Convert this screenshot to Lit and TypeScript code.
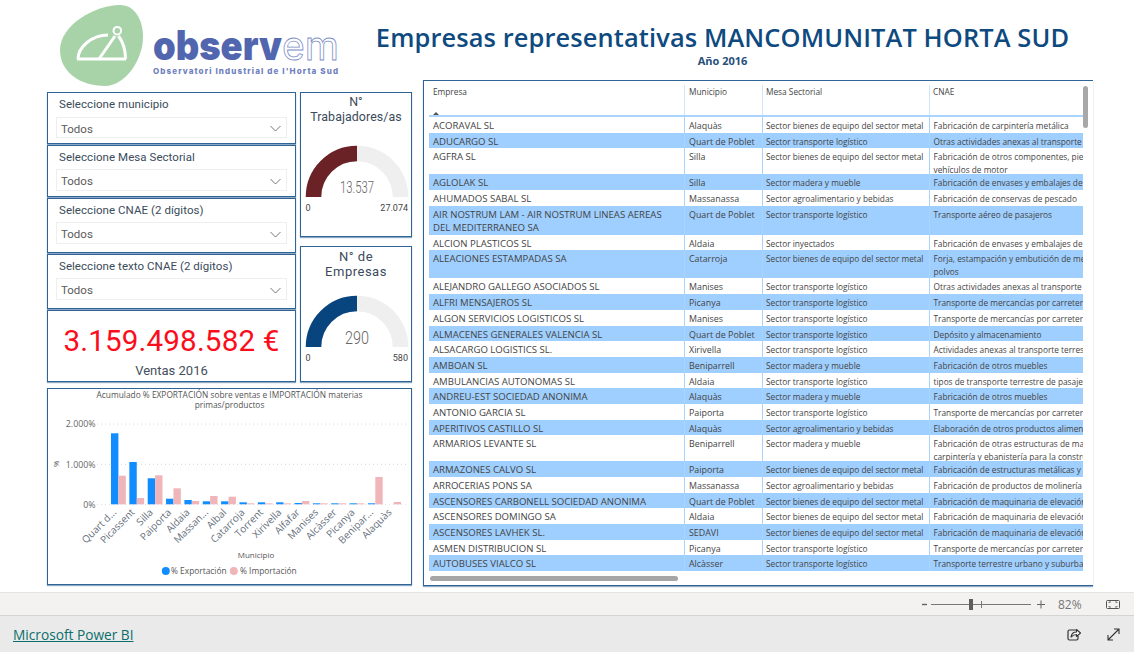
import { LitElement, html, css, svg } from "lit";
import { customElement } from "lit/decorators.js";

type Row = [string, string, string, string, number?];
const M = "Sector bienes de equipo del sector metal";
const T = "Sector transporte logístico";
const W = "Sector madera y mueble";
const A = "Sector agroalimentario y bebidas";
const TM = "Transporte de mercancías por carretera";
const EV = "Fabricación de maquinaria de elevación y manipulación";
const rows: Row[] = [
  ["ACORAVAL SL", "Alaquàs", M, "Fabricación de carpintería metálica"],
  ["ADUCARGO SL", "Quart de Poblet", T, "Otras actividades anexas al transporte"],
  ["AGFRA SL", "Silla", M, "Fabricación de otros componentes, piezas y accesorios para\nvehículos de motor", 26],
  ["AGLOLAK SL", "Silla", W, "Fabricación de envases y embalajes de madera"],
  ["AHUMADOS SABAL SL", "Massanassa", A, "Fabricación de conservas de pescado"],
  ["AIR NOSTRUM LAM - AIR NOSTRUM LINEAS AEREAS\nDEL MEDITERRANEO SA", "Quart de Poblet", T, "Transporte aéreo de pasajeros", 29],
  ["ALCION PLASTICOS SL", "Aldaia", "Sector inyectados", "Fabricación de envases y embalajes de plástico"],
  ["ALEACIONES ESTAMPADAS SA", "Catarroja", M, "Forja, estampación y embutición de metales; metalurgia de\npolvos", 28],
  ["ALEJANDRO GALLEGO ASOCIADOS SL", "Manises", T, "Otras actividades anexas al transporte"],
  ["ALFRI MENSAJEROS SL", "Picanya", T, TM],
  ["ALGON SERVICIOS LOGISTICOS SL", "Manises", T, TM],
  ["ALMACENES GENERALES VALENCIA SL", "Quart de Poblet", T, "Depósito y almacenamiento"],
  ["ALSACARGO LOGISTICS SL.", "Xirivella", T, "Actividades anexas al transporte terrestre"],
  ["AMBOAN SL", "Beniparrell", W, "Fabricación de otros muebles"],
  ["AMBULANCIAS AUTONOMAS SL", "Aldaia", T, "tipos de transporte terrestre de pasajeros"],
  ["ANDREU-EST SOCIEDAD ANONIMA", "Alaquàs", W, "Fabricación de otros muebles"],
  ["ANTONIO GARCIA SL", "Paiporta", T, TM],
  ["APERITIVOS CASTILLO SL", "Alaquàs", A, "Elaboración de otros productos alimenticios"],
  ["ARMARIOS LEVANTE SL", "Beniparrell", W, "Fabricación de otras estructuras de madera y piezas de\ncarpintería y ebanistería para la construcción", 26],
  ["ARMAZONES CALVO SL", "Paiporta", M, "Fabricación de estructuras metálicas y sus componentes"],
  ["ARROCERIAS PONS SA", "Massanassa", A, "Fabricación de productos de molinería"],
  ["ASCENSORES CARBONELL SOCIEDAD ANONIMA", "Quart de Poblet", M, EV],
  ["ASCENSORES DOMINGO SA", "Aldaia", M, EV],
  ["ASCENSORES LAVHEK SL.", "SEDAVI", M, EV],
  ["ASMEN DISTRIBUCION SL", "Picanya", T, TM],
  ["AUTOBUSES VIALCO SL", "Alcàsser", T, "Transporte terrestre urbano y suburbano de pasajeros"],
];

const slicers: [string, string][] = [
  ["Seleccione municipio", "s1"],
  ["Seleccione Mesa Sectorial", "s2"],
  ["Seleccione CNAE (2 dígitos)", "s3"],
  ["Seleccione texto CNAE (2 dígitos)", "s4"],
];

const bars: [string, number, number][] = [
  ["Quart d...", 433.3, 475.7],
  ["Picassent", 462, 498],
  ["Silla", 478.3, 475.3],
  ["Paiporta", 498.7, 488.3],
  ["Aldaia", 500, 501],
  ["Massan...", 501.3, 496],
  ["Albal", 501.3, 496.7],
  ["Catarroja", 502.3, 503.3],
  ["Torrent", 502.3, 503.3],
  ["Xirivella", 502.3, 503.3],
  ["Alfafar", 503, 501],
  ["Manises", 503.3, 503.3],
  ["Alcàsser", 503.3, 503.3],
  ["Picanya", 503.3, 503.3],
  ["Benipar...", 503.3, 477],
  ["Alaquàs", 504.3, 502],
];

const lines = (s: string) => {
  const p = s.split("\n");
  return p.map((l, i) => (i ? html`<br />${l}` : l));
};

@customElement("app-root")
export class AppRoot extends LitElement {
  static styles = css`
    :host { display: block; width: 1134px; height: 652px; overflow: hidden; background: #fff; font-family: "Roboto", sans-serif; color: #3d4a57; }
    .report { height: 592px; padding-left: 47px; box-sizing: border-box; }
    .top { height: 80px; display: flex; }
    .logo { width: 328px; height: 80px; flex: none; position: relative; }
    .logo svg { position: absolute; left: 0; top: 0; overflow: visible; }
    .logotext { font-family: "Inter", "Liberation Sans", sans-serif; font-weight: 900; fill: #5166ae; font-size: 41px; }
    .logoem { font-family: "Inter", "Liberation Sans", sans-serif; font-weight: 400; fill: #fff; stroke: #7d8ec6; stroke-width: 0.8px; font-size: 40px; }
    .logosub { font-family: "Inter", "Liberation Sans", sans-serif; font-weight: 800; fill: #6e80bd; font-size: 8px; }
    .heading { margin-left: 0; width: 695px; text-align: center; color: #0e4a80; padding-top: 21px; box-sizing: border-box; }
    .heading h1 { margin: 0; font: 600 25.4px/32px "Open Sans", sans-serif; white-space: nowrap; letter-spacing: 0.12px; }
    .heading p { margin: 0; font: 700 11px/14px "Open Sans", sans-serif; color: #264f7c; position: relative; top: 1px; }
    .body { display: flex; align-items: flex-start; }
    .left { width: 365px; margin-top: 12px; flex: none; }
    .cols { display: flex; justify-content: space-between; }
    .stack { width: 249px; display: flex; flex-direction: column; gap: 1px; }
    .gauges { width: 112px; display: flex; flex-direction: column; gap: 9px; }
    .card { box-sizing: border-box; border: 1px solid #2f6496; box-shadow: 0 1px 1px #8fa9c4; background: #fff; }
    .slicer { padding: 0 8px; height: 52px; }
    .slicer.tall { height: 55px; }
    .slicer h3 { margin: 0; font: 400 11.5px/16px "Roboto", sans-serif; letter-spacing: 0.05px; color: #3b4b5b; padding: 3px 0 0 3px; height: 23px; box-sizing: border-box; white-space: nowrap; }
    .slicer.s1 h3 { height: 24px; }
    .slicer.s1 .select { height: 21px; }
    .select { height: 22px; border: 1px solid #eeeeee; display: flex; align-items: center; justify-content: space-between; padding: 2px 5px 0 4px; box-sizing: border-box; font: 400 11.5px "Roboto", sans-serif; color: #5a5a5a; }
    .kpi { height: 72px; text-align: center; }
    .kpi .val { font: 400 29.6px/38px "Roboto", sans-serif; color: #fb0d1c; letter-spacing: 0.15px; padding-top: 11px; white-space: nowrap; }
    .kpi .lab { font: 400 13px/16px "Roboto", sans-serif; color: #44505c; margin-top: 3px; }
    .gauge { text-align: center; position: relative; }
    .gauge.g1 { height: 145px; }
    .gauge.g2 { height: 136px; }
    .gauge h3 { margin: 0; font: 400 12.4px/15px "Roboto", sans-serif; letter-spacing: 0.07px; color: #3b4b5b; padding-top: 1px; }
    .g2 h3 { padding-top: 2px; letter-spacing: 0.5px; font-size: 13px; }
    .gauge svg { display: block; }
    .g1 svg { margin-top: 21px; }
    .g2 svg { margin-top: 16px; }
    .gv { font-family: "Roboto", sans-serif; font-weight: 300; fill: #666; text-anchor: middle; }
    .gt { font-family: "Roboto", sans-serif; font-size: 9px; fill: #444; }
    .chart { height: 197px; margin-top: 6px; }
    .chart h4 { margin: 0; font: 400 8.35px/10px "Open Sans", sans-serif; color: #555; text-align: center; padding: 1px 22px 0 22px; }
    .chart svg { display: block; }
    .axis { font: 400 8.8px "Open Sans", sans-serif; fill: #666; }
    .cat { font: 400 10px "Open Sans", sans-serif; fill: #66707c; }
    .axis2 { font: 400 8px "Open Sans", sans-serif; fill: #555; }
    .legend { font: 400 8.4px "Open Sans", sans-serif; fill: #555; }
    .tablecard { position: relative; margin: 0 0 0 11px; width: 670px; height: 506px; border-right: 0; padding: 4px 0 0 5px; overflow: hidden; }
    .table { width: 654px; height: 489px; overflow: hidden; font: 400 8.3px/13px "Open Sans", sans-serif; color: #444; }
    .row, .head { display: grid; grid-template-columns: 255px 78px 167px 154px; white-space: nowrap; }
    .head { height: 32px; border-bottom: 2px solid #a9d4fd; box-sizing: border-box; }
    .head div { padding: 1px 0 0 4px; border-left: 1px solid #cfe6fd; overflow: hidden; position: relative; line-height: 12px; }
    .head div:first-child { border-left: 0; }
    .head div:nth-child(3) { padding-left: 3px; }
    .head div:nth-child(4) { padding-left: 3px; }
    .sort { position: absolute; left: 4px; bottom: 0; width: 0; height: 0; border: 3px solid transparent; border-bottom: 3px solid #555; border-top: 0; }
    .cell { padding: 2px 0 0 3px; overflow: hidden; border-left: 1px solid #a9d4fd; box-sizing: border-box; }
    .cell:first-child { border-left: 0; padding: 2px 0 0 4px; font-size: 9.6px; line-height: 13.4px; }
    .cell:nth-child(2) { font-size: 8.9px; padding-left: 4px; }
    .cell:nth-child(4) { padding-left: 3.5px; }
    .row.alt { background: #9fcfff; }
    .vbar { position: absolute; left: 659px; top: 5px; width: 5px; height: 42px; background: #a8a8a8; border-radius: 3px; }
    .hbar { position: absolute; left: 6px; top: 495px; width: 248px; height: 5px; background: #a6a6a6; border-radius: 3px; }
    .zoom { height: 24px; background: #f3f2f1; border-top: 1px solid #e3e3e3; border-bottom: 1px solid #d4d4d4; box-sizing: border-box; }
    .zoom svg { display: block; }
    .footer { height: 36px; background: #eaeaea; display: flex; align-items: center; padding: 0 13px; }
    .footer a { font: 400 13.7px "Open Sans", sans-serif; color: #0b6f6c; text-decoration: underline; flex: none; padding-top: 1px; }
    .sp { flex: 1; }
    .ic { display: block; flex: none; }
  `;

  chevron() {
    return svg`<svg width="11" height="7" viewBox="0 0 11 7"><path d="M.5 1l5 5 5-5" fill="none" stroke="#777" stroke-width="1"/></svg>`;
  }

  arc(color: string) {
    const cx = 56, r = 43.5, base = 52;
    return svg`
      <path d="M${cx - r} ${base}A${r} ${r} 0 0 1 ${cx + r} ${base}" fill="none" stroke="#f0efef" stroke-width="15.5"/>
      <path d="M${cx - r} ${base}A${r} ${r} 0 0 1 ${cx} ${base - r}" fill="none" stroke="${color}" stroke-width="15.5"/>`;
  }

  gauge(color: string, val: string, size: number, len: number, max: string) {
    return html`<svg width="110" height="70" viewBox="0 0 110 70">
      ${this.arc(color)}
      <text class="gv" x="56" y="${size > 18 ? 49 : 48}" font-size="${size}" textLength="${len}" lengthAdjust="spacingAndGlyphs">${val}</text>
      <text class="gt" x="4.5" y="66">0</text>
      <text class="gt" x="107" y="66" text-anchor="end">${max}</text>
    </svg>`;
  }

  chart() {
    const ox = 48, oy = 410;
    return html`<svg width="363" height="172" viewBox="${ox} ${oy} 363 172">
      ${[424, 464.3].map((y) => svg`<line x1="97" x2="406" y1="${y}" y2="${y}" stroke="#d4d4d4" stroke-width="1" stroke-dasharray="1 3"/>`)}
      <line x1="97" x2="406" y1="504.5" y2="504.5" stroke="#e2e2e2" stroke-width="1" stroke-dasharray="1 3"/>
      <text class="axis" x="95.500" y="427.3" text-anchor="end">2.000%</text>
      <text class="axis" x="95.500" y="467.6" text-anchor="end">1.000%</text>
      <text class="axis" x="95.500" y="507.8" text-anchor="end">0%</text>
      <text class="axis2" transform="translate(59 464) rotate(-90)" text-anchor="middle">%</text>
      ${bars.map(([n, b, p], i) => {
        const x = 111 + 18.35 * i;
        return svg`
          <rect x="${x}" y="${b}" width="7.4" height="${504.3 - b}" fill="#118dff"/>
          <rect x="${x + 7.4}" y="${p}" width="7.4" height="${504.3 - p}" fill="#efb5b9"/>
          <text class="cat" text-anchor="end" transform="translate(${x + 6} 513) rotate(-45)">${n}</text>`;
      })}
      <text class="axis2" x="256" y="558" text-anchor="middle">Municipio</text>
      <circle cx="165.8" cy="571" r="4" fill="#118dff"/>
      <text class="legend" x="171" y="574">% Exportación</text>
      <circle cx="233.8" cy="571" r="4" fill="#efb5b9"/>
      <text class="legend" x="240" y="574">% Importación</text>
    </svg>`;
  }

  render() {
    return html`
      <div class="report">
        <div class="top">
          <div class="logo">
            <svg width="328" height="90" viewBox="47 0 328 90">
              <path d="M120 5C135 5 143 20 143 37C143 60 125 86 105 86C80 86 60 72 60 50C60 25 95 5 120 5Z" fill="#a8d3a9"/>
              <g fill="none" stroke="#fff" stroke-width="3">
                <path d="M77 59H126"/>
                <path d="M78 59C78 47 92 35 108 35"/>
                <path d="M118.500 36C123 42 125.500 50 125.500 59"/>
                <path d="M99 59L115 36"/>
                <circle cx="117.3" cy="30.7" r="3.800" stroke-width="2"/>
              </g>
              <text class="logotext" x="153" y="60" textLength="129" lengthAdjust="spacingAndGlyphs">observ</text>
              <text class="logoem" x="282" y="60" textLength="57" lengthAdjust="spacingAndGlyphs">em</text>
              <text class="logosub" x="153" y="73.500" textLength="185">Observatori Industrial de l'Horta Sud</text>
            </svg>
          </div>
          <div class="heading">
            <h1>Empresas representativas MANCOMUNITAT HORTA SUD</h1>
            <p>Año 2016</p>
          </div>
        </div>
        <div class="body">
          <div class="left">
            <div class="cols">
              <div class="stack">
                ${slicers.map(
                  ([t, c], i) => html`<div class="card slicer ${c} ${i > 1 ? "tall" : ""}">
                    <h3>${t}</h3>
                    <div class="select"><span>Todos</span>${this.chevron()}</div>
                  </div>`
                )}
                <div class="card kpi">
                  <div class="val">3.159.498.582 €</div>
                  <div class="lab">Ventas 2016</div>
                </div>
              </div>
              <div class="gauges">
                <div class="card gauge g1">
                  <h3>N°<br />Trabajadores/as</h3>
                  ${this.gauge("#6b2227", "13.537", 17, 34, "27.074")}
                </div>
                <div class="card gauge g2">
                  <h3>N° de<br />Empresas</h3>
                  ${this.gauge("#08457e", "290", 19, 24, "580")}
                </div>
              </div>
            </div>
            <div class="card chart">
              <h4>Acumulado % EXPORTACIÓN sobre ventas e IMPORTACIÓN materias primas/productos</h4>
              ${this.chart()}
            </div>
          </div>
          <div class="card tablecard">
            <div class="table">
              <div class="head">
                <div>Empresa<span class="sort"></span></div>
                <div>Municipio</div>
                <div>Mesa Sectorial</div>
                <div>CNAE</div>
              </div>
              ${rows.map(
                ([e, m, s, c, h], i) => html`<div class="row ${i % 2 ? "alt" : ""}" style="height:${h ?? 15.7}px">
                  <div class="cell">${lines(e)}</div>
                  <div class="cell">${m}</div>
                  <div class="cell">${s}</div>
                  <div class="cell">${lines(c)}</div>
                </div>`
              )}
            </div>
            <div class="vbar"></div>
            <div class="hbar"></div>
          </div>
        </div>
      </div>
      <div class="zoom">
        <svg width="1134" height="22" viewBox="0 593 1134 22">
          <path d="M922 604.5h5" stroke="#666" stroke-width="1.400"/>
          <path d="M931 604.5H1031" stroke="#777" stroke-width="1"/>
          <rect x="969" y="599" width="4" height="11" fill="#605e5c"/>
          <path d="M981.5 601v7" stroke="#777"/>
          <path d="M1037 604.5h8M1041 600.5v8" stroke="#666" stroke-width="1"/>
          <text x="1058" y="609" font-family="Open Sans" font-size="12" fill="#777">82%</text>
          <rect x="1106.5" y="600.5" width="13" height="8" rx="1" fill="none" stroke="#555"/>
          <path d="M1109 603v-1h2M1117 603v-1h-2M1109 606v1h2M1117 606v1h-2" fill="none" stroke="#555" stroke-width=".8"/>
        </svg>
      </div>
      <div class="footer">
        <a href="#">Microsoft Power BI</a>
        <div class="sp"></div>
        <svg class="ic" width="14" height="14" viewBox="0 0 14 14" style="margin-right:26px">
          <path d="M9 3H2.500A1.500 1.500 0 0 0 1 4.500v7A1.500 1.500 0 0 0 2.500 13h7a1.500 1.500 0 0 0 1.500-1.500V9" fill="none" stroke="#333" stroke-width="1.200"/>
          <path d="M4 10c.5-3 2.500-5 5.500-5V2.500L13.500 6 9.500 9.500V7.500C7 7.500 5.500 8.500 4 10Z" fill="#fff" stroke="#333" stroke-width="1.100" stroke-linejoin="round"/>
        </svg>
        <svg class="ic" width="13" height="13" viewBox="0 0 13 13" style="margin-right:1px">
          <path d="M1 12L12 1M7 1h5v5M1 7v5h5" fill="none" stroke="#333" stroke-width="1.100"/>
        </svg>
      </div>
    `;
  }
}
